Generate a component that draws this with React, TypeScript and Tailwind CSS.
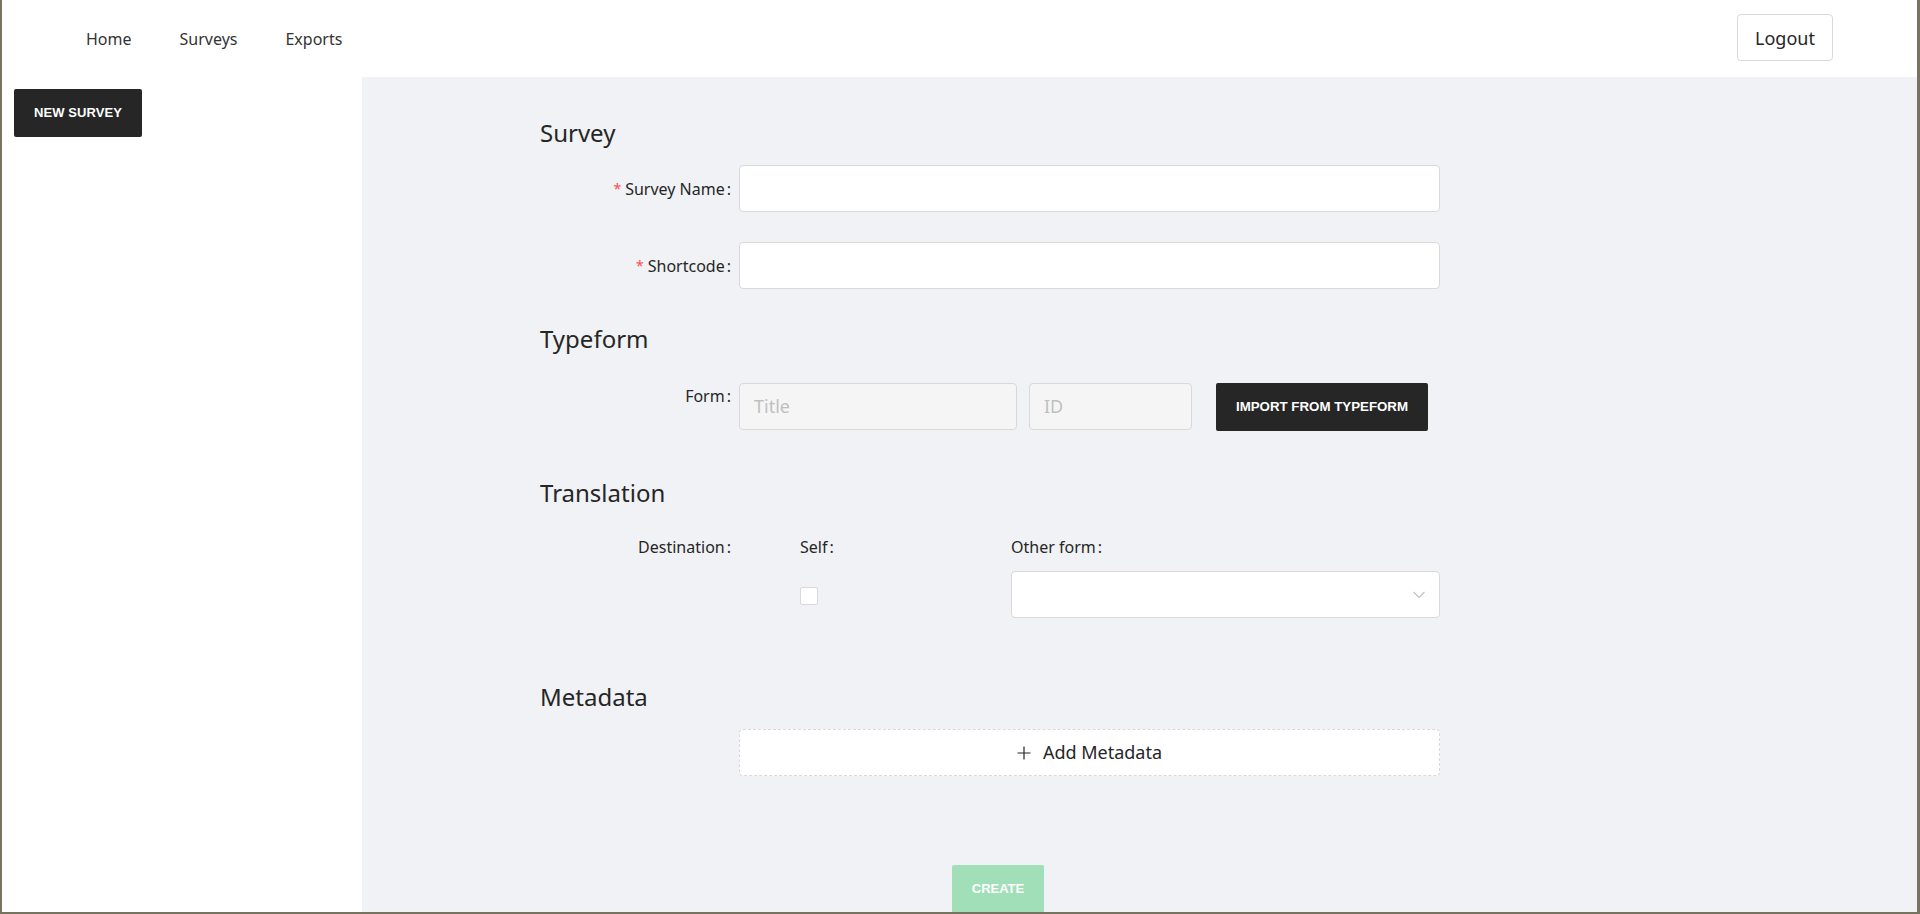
import React from "react";

function Label({ text, required }: { text: string; required?: boolean }) {
  return (
    <span className="flex items-center text-[16px] text-[#262626] leading-[26px]">
      {required && <span className="text-[#ff4d4f] mr-[4px] text-[14px]">*</span>}
      <span>{text}</span>
      <span className="ml-[2px]">:</span>
    </span>
  );
}

export default function App() {
  return (
    <div className="w-[1920px] h-[914px] overflow-hidden bg-white border-l-2 border-r-[3px] border-b-2 border-[#767360] flex flex-col font-['Noto_Sans',sans-serif]">
      <header className="h-[77px] shrink-0 flex items-start bg-white">
        <nav className="flex ml-[60px] h-full items-center text-[16px] text-[#333]">
          <span className="px-6">Home</span>
          <span className="px-6">Surveys</span>
          <span className="px-6">Exports</span>
        </nav>
        <div className="ml-auto mr-[84px] mt-[14px]">
          <button className="w-[96px] h-[47px] border border-[#d9d9d9] rounded-[4px] bg-white text-[18px] text-[#262626] flex items-center justify-center pt-[1px]">
            Logout
          </button>
        </div>
      </header>
      <div className="flex flex-1 min-h-0">
        <aside className="w-[360px] shrink-0 bg-white pt-[12px] pl-[12px]">
          <button className="w-[128px] h-[48px] bg-[#262626] rounded-[2px] text-white font-bold text-[13px] font-['Liberation_Sans',Arial,sans-serif] tracking-[0.1px]">
            NEW SURVEY
          </button>
        </aside>
        <main className="flex-1 bg-[#f0f2f5] overflow-hidden pl-[178px] pt-[40px]">
          <div className="w-[900px]">
            <h2 className="text-[24px] leading-[32px] text-[#262626]">Survey</h2>

            <div className="mt-[16px] flex items-center">
              <div className="w-[199px] pr-[8px] flex justify-end">
                <Label text="Survey Name" required />
              </div>
              <div className="w-[701px] h-[47px] bg-white border border-[#d9d9d9] rounded-[4px]" />
            </div>

            <div className="mt-[30px] flex items-center">
              <div className="w-[199px] pr-[8px] flex justify-end">
                <Label text="Shortcode" required />
              </div>
              <div className="w-[701px] h-[47px] bg-white border border-[#d9d9d9] rounded-[4px]" />
            </div>

            <h2 className="mt-[34px] text-[24px] leading-[32px] text-[#262626]">Typeform</h2>

            <div className="mt-[28px] flex items-start">
              <div className="w-[199px] pr-[8px] flex justify-end">
                <Label text="Form" />
              </div>
              <div className="flex items-start">
                <div className="w-[278px] h-[47px] bg-[#f5f5f5] border border-[#d9d9d9] rounded-[4px] pl-[14px] flex items-center text-[18px] text-[#bfbfbf]">
                  Title
                </div>
                <div className="ml-[12px] w-[163px] h-[47px] bg-[#f5f5f5] border border-[#d9d9d9] rounded-[4px] pl-[14px] flex items-center text-[18px] text-[#bfbfbf]">
                  ID
                </div>
                <button className="ml-[24px] w-[212px] h-[48px] bg-[#262626] rounded-[2px] text-white font-bold text-[13.3px] font-['Liberation_Sans',Arial,sans-serif]">
                  IMPORT FROM TYPEFORM
                </button>
              </div>
            </div>

            <h2 className="mt-[46px] text-[24px] leading-[32px] text-[#262626]">Translation</h2>

            <div className="mt-[25px] flex items-start">
              <div className="w-[199px] pr-[8px] flex justify-end">
                <Label text="Destination" />
              </div>
              <div className="ml-[61px] w-[211px] flex flex-col">
                <div className="flex">
                  <Label text="Self" />
                </div>
                <div className="mt-[27px] w-[18px] h-[18px] bg-white border border-[#d9d9d9] rounded-[2px]" />
              </div>
              <div className="w-[429px] flex flex-col">
                <div className="flex">
                  <Label text="Other form" />
                </div>
                <div className="mt-[11px] h-[47px] bg-white border border-[#d9d9d9] rounded-[4px] flex items-center justify-end pr-[14px]">
                  <svg width="12" height="8" viewBox="0 0 12 8" fill="none">
                    <polyline points="0.5,1 6,6.5 11.5,1" stroke="#bfbfbf" strokeWidth="1.1" />
                  </svg>
                </div>
              </div>
            </div>

            <h2 className="mt-[63px] text-[24px] leading-[32px] text-[#262626]">Metadata</h2>

            <div className="mt-[16px] ml-[199px] w-[701px] h-[47px] bg-white border border-dashed border-[#d9d9d9] rounded-[4px] flex items-center justify-center text-[18px] text-[#262626]">
              <svg width="14" height="14" viewBox="0 0 14 14" className="mr-[12px]">
                <path d="M7 0.5V13.5M0.5 7H13.5" stroke="#262626" strokeWidth="1.2" />
              </svg>
              <span>Add Metadata</span>
            </div>

            <button className="mt-[89px] ml-[412px] w-[92px] h-[48px] bg-[#a0dfb7] rounded-[2px] text-white font-bold text-[13px] font-['Liberation_Sans',Arial,sans-serif]">
              CREATE
            </button>
          </div>
        </main>
      </div>
    </div>
  );
}
